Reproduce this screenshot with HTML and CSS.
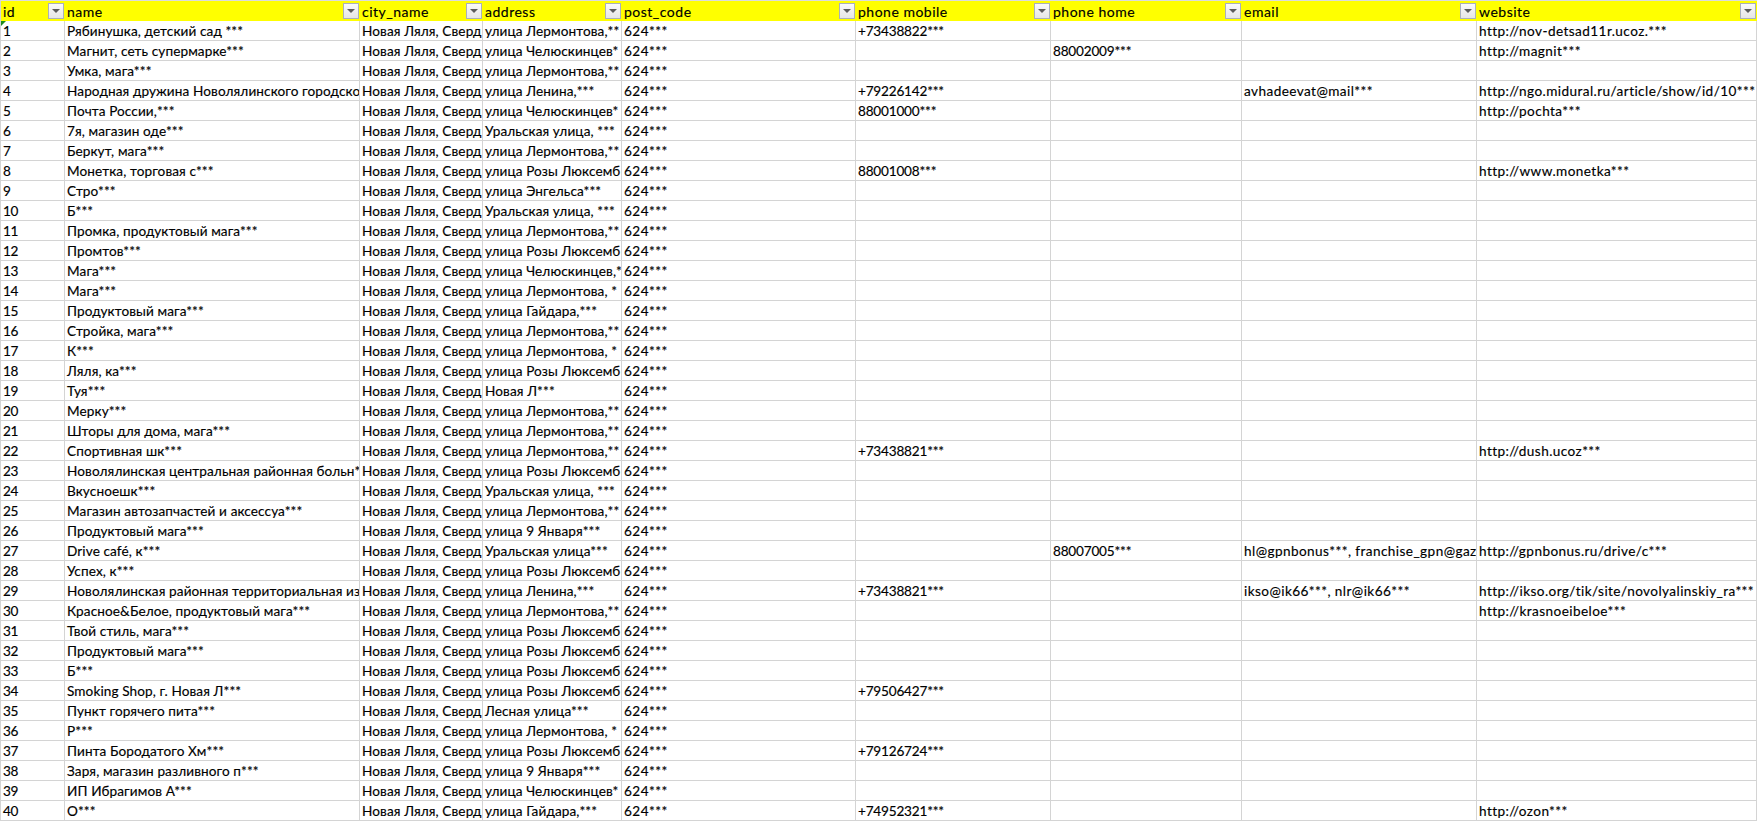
FILE: index.html
```html
<!DOCTYPE html>
<html lang="ru">
<head>
<meta charset="utf-8">
<title>Sheet</title>
<link rel="stylesheet" href="styles.css">
</head>
<body>
<table class="sheet">
<colgroup>
<col class="c-id"><col class="c-name"><col class="c-city"><col class="c-addr"><col class="c-post"><col class="c-mob"><col class="c-home"><col class="c-mail"><col class="c-web">
</colgroup>
<thead>
<tr>
<th><div class="head"><span class="label">id</span><span class="filter"></span></div></th>
<th><div class="head"><span class="label">name</span><span class="filter"></span></div></th>
<th><div class="head"><span class="label">city_name</span><span class="filter"></span></div></th>
<th><div class="head"><span class="label">address</span><span class="filter"></span></div></th>
<th><div class="head"><span class="label">post_code</span><span class="filter"></span></div></th>
<th><div class="head"><span class="label">phone mobile</span><span class="filter"></span></div></th>
<th><div class="head"><span class="label">phone home</span><span class="filter"></span></div></th>
<th><div class="head"><span class="label">email</span><span class="filter"></span></div></th>
<th><div class="head"><span class="label">website</span><span class="filter"></span></div></th>
</tr>
</thead>
<tbody>
<tr><td class="first">1</td><td>Рябинушка, детский сад ***</td><td>Новая Ляля, Сверд</td><td>улица Лермонтова,**</td><td class="post">624***</td><td class="tel">+73438822***</td><td></td><td></td><td class="lat">http://nov-detsad11r.ucoz.***</td></tr>
<tr><td>2</td><td>Магнит, сеть супермарке***</td><td>Новая Ляля, Сверд</td><td>улица Челюскинцев*</td><td class="post">624***</td><td></td><td class="tel">88002009***</td><td></td><td class="lat">http://magnit***</td></tr>
<tr><td>3</td><td>Умка, мага***</td><td>Новая Ляля, Сверд</td><td>улица Лермонтова,**</td><td class="post">624***</td><td></td><td></td><td></td><td></td></tr>
<tr><td>4</td><td>Народная дружина Новолялинского городско</td><td>Новая Ляля, Сверд</td><td>улица Ленина,***</td><td class="post">624***</td><td class="tel">+79226142***</td><td></td><td class="lat">avhadeevat@mail***</td><td class="lat">http://ngo.midural.ru/article/show/id/10***</td></tr>
<tr><td>5</td><td>Почта России,***</td><td>Новая Ляля, Сверд</td><td>улица Челюскинцев*</td><td class="post">624***</td><td class="tel">88001000***</td><td></td><td></td><td class="lat">http://pochta***</td></tr>
<tr><td>6</td><td>7я, магазин оде***</td><td>Новая Ляля, Сверд</td><td>Уральская улица, ***</td><td class="post">624***</td><td></td><td></td><td></td><td></td></tr>
<tr><td>7</td><td>Беркут, мага***</td><td>Новая Ляля, Сверд</td><td>улица Лермонтова,**</td><td class="post">624***</td><td></td><td></td><td></td><td></td></tr>
<tr><td>8</td><td>Монетка, торговая с***</td><td>Новая Ляля, Сверд</td><td>улица Розы Люксемб</td><td class="post">624***</td><td class="tel">88001008***</td><td></td><td></td><td class="lat">http://www.monetka***</td></tr>
<tr><td>9</td><td>Стро***</td><td>Новая Ляля, Сверд</td><td>улица Энгельса***</td><td class="post">624***</td><td></td><td></td><td></td><td></td></tr>
<tr><td>10</td><td>Б***</td><td>Новая Ляля, Сверд</td><td>Уральская улица, ***</td><td class="post">624***</td><td></td><td></td><td></td><td></td></tr>
<tr><td>11</td><td>Промка, продуктовый мага***</td><td>Новая Ляля, Сверд</td><td>улица Лермонтова,**</td><td class="post">624***</td><td></td><td></td><td></td><td></td></tr>
<tr><td>12</td><td>Промтов***</td><td>Новая Ляля, Сверд</td><td>улица Розы Люксемб</td><td class="post">624***</td><td></td><td></td><td></td><td></td></tr>
<tr><td>13</td><td>Мага***</td><td>Новая Ляля, Сверд</td><td>улица Челюскинцев,*</td><td class="post">624***</td><td></td><td></td><td></td><td></td></tr>
<tr><td>14</td><td>Мага***</td><td>Новая Ляля, Сверд</td><td>улица Лермонтова, *</td><td class="post">624***</td><td></td><td></td><td></td><td></td></tr>
<tr><td>15</td><td>Продуктовый мага***</td><td>Новая Ляля, Сверд</td><td>улица Гайдара,***</td><td class="post">624***</td><td></td><td></td><td></td><td></td></tr>
<tr><td>16</td><td>Стройка, мага***</td><td>Новая Ляля, Сверд</td><td>улица Лермонтова,**</td><td class="post">624***</td><td></td><td></td><td></td><td></td></tr>
<tr><td>17</td><td>К***</td><td>Новая Ляля, Сверд</td><td>улица Лермонтова, *</td><td class="post">624***</td><td></td><td></td><td></td><td></td></tr>
<tr><td>18</td><td>Ляля, ка***</td><td>Новая Ляля, Сверд</td><td>улица Розы Люксемб</td><td class="post">624***</td><td></td><td></td><td></td><td></td></tr>
<tr><td>19</td><td>Туя***</td><td>Новая Ляля, Сверд</td><td>Новая Л***</td><td class="post">624***</td><td></td><td></td><td></td><td></td></tr>
<tr><td>20</td><td>Мерку***</td><td>Новая Ляля, Сверд</td><td>улица Лермонтова,**</td><td class="post">624***</td><td></td><td></td><td></td><td></td></tr>
<tr><td>21</td><td>Шторы для дома, мага***</td><td>Новая Ляля, Сверд</td><td>улица Лермонтова,**</td><td class="post">624***</td><td></td><td></td><td></td><td></td></tr>
<tr><td>22</td><td>Спортивная шк***</td><td>Новая Ляля, Сверд</td><td>улица Лермонтова,**</td><td class="post">624***</td><td class="tel">+73438821***</td><td></td><td></td><td class="lat">http://dush.ucoz***</td></tr>
<tr><td>23</td><td>Новолялинская центральная районная больн*</td><td>Новая Ляля, Сверд</td><td>улица Розы Люксемб</td><td class="post">624***</td><td></td><td></td><td></td><td></td></tr>
<tr><td>24</td><td>Вкусноешк***</td><td>Новая Ляля, Сверд</td><td>Уральская улица, ***</td><td class="post">624***</td><td></td><td></td><td></td><td></td></tr>
<tr><td>25</td><td>Магазин автозапчастей и аксессуа***</td><td>Новая Ляля, Сверд</td><td>улица Лермонтова,**</td><td class="post">624***</td><td></td><td></td><td></td><td></td></tr>
<tr><td>26</td><td>Продуктовый мага***</td><td>Новая Ляля, Сверд</td><td>улица 9 Января***</td><td class="post">624***</td><td></td><td></td><td></td><td></td></tr>
<tr><td>27</td><td>Drive café, к***</td><td>Новая Ляля, Сверд</td><td>Уральская улица***</td><td class="post">624***</td><td></td><td class="tel">88007005***</td><td class="lat">hl@gpnbonus***, franchise_gpn@gaz</td><td class="lat">http://gpnbonus.ru/drive/c***</td></tr>
<tr><td>28</td><td>Успех, к***</td><td>Новая Ляля, Сверд</td><td>улица Розы Люксемб</td><td class="post">624***</td><td></td><td></td><td></td><td></td></tr>
<tr><td>29</td><td>Новолялинская районная территориальная из</td><td>Новая Ляля, Сверд</td><td>улица Ленина,***</td><td class="post">624***</td><td class="tel">+73438821***</td><td></td><td class="lat">ikso@ik66***, nlr@ik66***</td><td class="lat">http://ikso.org/tik/site/novolyalinskiy_ra***</td></tr>
<tr><td>30</td><td>Красное&amp;Белое, продуктовый мага***</td><td>Новая Ляля, Сверд</td><td>улица Лермонтова,**</td><td class="post">624***</td><td></td><td></td><td></td><td class="lat">http://krasnoeibeloe***</td></tr>
<tr><td>31</td><td>Твой стиль, мага***</td><td>Новая Ляля, Сверд</td><td>улица Розы Люксемб</td><td class="post">624***</td><td></td><td></td><td></td><td></td></tr>
<tr><td>32</td><td>Продуктовый мага***</td><td>Новая Ляля, Сверд</td><td>улица Розы Люксемб</td><td class="post">624***</td><td></td><td></td><td></td><td></td></tr>
<tr><td>33</td><td>Б***</td><td>Новая Ляля, Сверд</td><td>улица Розы Люксемб</td><td class="post">624***</td><td></td><td></td><td></td><td></td></tr>
<tr><td>34</td><td>Smoking Shop, г. Новая Л***</td><td>Новая Ляля, Сверд</td><td>улица Розы Люксемб</td><td class="post">624***</td><td class="tel">+79506427***</td><td></td><td></td><td></td></tr>
<tr><td>35</td><td>Пункт горячего пита***</td><td>Новая Ляля, Сверд</td><td>Лесная улица***</td><td class="post">624***</td><td></td><td></td><td></td><td></td></tr>
<tr><td>36</td><td>Р***</td><td>Новая Ляля, Сверд</td><td>улица Лермонтова, *</td><td class="post">624***</td><td></td><td></td><td></td><td></td></tr>
<tr><td>37</td><td>Пинта Бородатого Хм***</td><td>Новая Ляля, Сверд</td><td>улица Розы Люксемб</td><td class="post">624***</td><td class="tel">+79126724***</td><td></td><td></td><td></td></tr>
<tr><td>38</td><td>Заря, магазин разливного п***</td><td>Новая Ляля, Сверд</td><td>улица 9 Января***</td><td class="post">624***</td><td></td><td></td><td></td><td></td></tr>
<tr><td>39</td><td>ИП Ибрагимов А***</td><td>Новая Ляля, Сверд</td><td>улица Челюскинцев*</td><td class="post">624***</td><td></td><td></td><td></td><td></td></tr>
<tr><td>40</td><td>О***</td><td>Новая Ляля, Сверд</td><td>улица Гайдара,***</td><td class="post">624***</td><td class="tel">+74952321***</td><td></td><td></td><td class="lat">http://ozon***</td></tr>
</tbody>
</table>
</body>
</html>
```
FILE: styles.css
```css
html, body {
  margin: 0;
  padding: 0;
  background: #fff;
  overflow: hidden;
}
.sheet {
  border-collapse: separate;
  border-spacing: 0;
  table-layout: fixed;
  width: 1757px;
  font-family: "Lato", "Open Sans", sans-serif;
  font-size: 13.6px;
  letter-spacing: 0.1px;
  color: #000;
  -webkit-text-stroke: 0.15px #000;
}
.c-id { width: 65px; }
.c-name { width: 295px; }
.c-city { width: 123px; }
.c-addr { width: 139px; }
.c-post { width: 234px; }
.c-mob { width: 195px; }
.c-home { width: 191px; }
.c-mail { width: 235px; }
.c-web { width: 280px; }
th {
  height: 20px;
  padding: 0;
  border-top: 1px solid #dcdcdc;
  background: #ffff00;
  font-weight: 400;
  text-align: left;
}
th:first-child,
td:first-child {
  border-left: 1px solid #d4d4d4;
}
.head {
  display: flex;
  align-items: center;
  justify-content: space-between;
  height: 20px;
  padding: 0 1px 0 2px;
}
.label {
  white-space: nowrap;
  font-size: 14px;
  letter-spacing: 0.5px;
}
.filter {
  position: relative;
  width: 16px;
  height: 16px;
  box-sizing: border-box;
  border: 1px solid #a9b0bb;
  background: linear-gradient(#fafafa, #e6e6e6);
}
.filter::after {
  content: "";
  position: absolute;
  left: 3px;
  top: 5px;
  border-left: 4px solid transparent;
  border-right: 4px solid transparent;
  border-top: 4px solid #5c5c5c;
}
td {
  height: 17px;
  padding: 2px 0 0 2px;
  border-right: 1px solid #d4d4d4;
  border-bottom: 1px solid #d4d4d4;
  white-space: nowrap;
  overflow: hidden;
  line-height: 17px;
  vertical-align: middle;
}
td:first-child {
  letter-spacing: -0.5px;
}
.post {
  letter-spacing: 0.45px;
}
.tel {
  letter-spacing: -0.2px;
}
.lat {
  letter-spacing: 0.42px;
}
.first {
  position: relative;
}
.first::before {
  content: "";
  position: absolute;
  left: 0;
  top: 0;
  border-top: 5px solid #1e8a1e;
  border-right: 5px solid transparent;
}
```
